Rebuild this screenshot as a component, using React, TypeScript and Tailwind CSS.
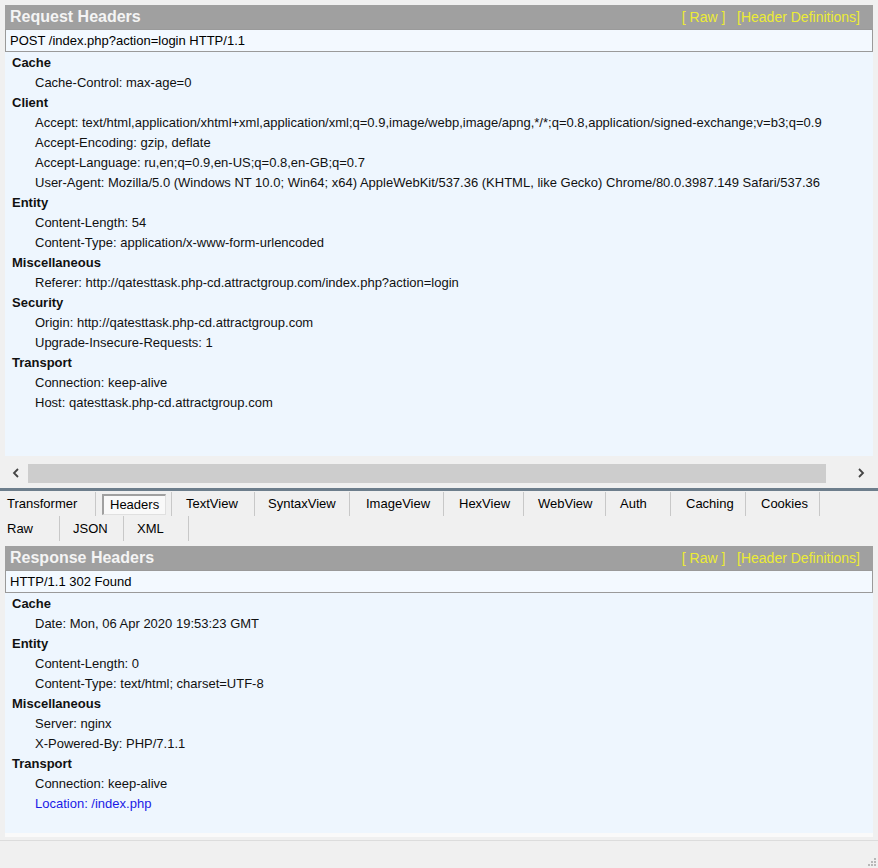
const font = { fontFamily: '"Liberation Sans", Arial, sans-serif' }

type Group = { title: string; items: { text: string; link?: boolean }[] }

const requestGroups: Group[] = [
  { title: "Cache", items: [{ text: "Cache-Control: max-age=0" }] },
  {
    title: "Client",
    items: [
      {
        text: "Accept: text/html,application/xhtml+xml,application/xml;q=0.9,image/webp,image/apng,*/*;q=0.8,application/signed-exchange;v=b3;q=0.9",
      },
      { text: "Accept-Encoding: gzip, deflate" },
      { text: "Accept-Language: ru,en;q=0.9,en-US;q=0.8,en-GB;q=0.7" },
      {
        text: "User-Agent: Mozilla/5.0 (Windows NT 10.0; Win64; x64) AppleWebKit/537.36 (KHTML, like Gecko) Chrome/80.0.3987.149 Safari/537.36",
      },
    ],
  },
  {
    title: "Entity",
    items: [{ text: "Content-Length: 54" }, { text: "Content-Type: application/x-www-form-urlencoded" }],
  },
  {
    title: "Miscellaneous",
    items: [{ text: "Referer: http://qatesttask.php-cd.attractgroup.com/index.php?action=login" }],
  },
  {
    title: "Security",
    items: [{ text: "Origin: http://qatesttask.php-cd.attractgroup.com" }, { text: "Upgrade-Insecure-Requests: 1" }],
  },
  {
    title: "Transport",
    items: [{ text: "Connection: keep-alive" }, { text: "Host: qatesttask.php-cd.attractgroup.com" }],
  },
]

const responseGroups: Group[] = [
  { title: "Cache", items: [{ text: "Date: Mon, 06 Apr 2020 19:53:23 GMT" }] },
  {
    title: "Entity",
    items: [{ text: "Content-Length: 0" }, { text: "Content-Type: text/html; charset=UTF-8" }],
  },
  {
    title: "Miscellaneous",
    items: [{ text: "Server: nginx" }, { text: "X-Powered-By: PHP/7.1.1" }],
  },
  {
    title: "Transport",
    items: [{ text: "Connection: keep-alive" }, { text: "Location: /index.php", link: true }],
  },
]

const tabsTop = [
  { label: "Transformer", w: "w-[96px] pl-[7px]" },
  { label: "Headers", w: "w-[76px] pl-[6px]", active: true },
  { label: "TextView", w: "w-[83px] pl-[14px]" },
  { label: "SyntaxView", w: "w-[95px] pl-[13px]" },
  { label: "ImageView", w: "w-[94px] pl-[16px]" },
  { label: "HexView", w: "w-[80px] pl-[15px]" },
  { label: "WebView", w: "w-[82px] pl-[14px]" },
  { label: "Auth", w: "w-[65px] pl-[14px]" },
  { label: "Caching", w: "w-[75px] pl-[15px]" },
  { label: "Cookies", w: "w-[74px] pl-[15px]" },
]

const tabsBottom = [
  { label: "Raw", w: "w-[60px] pl-[7px]" },
  { label: "JSON", w: "w-[64px] pl-[13px]" },
  { label: "XML", w: "w-[65px] pl-[13px]" },
]

function PanelHeader({ title, line }: { title: string; line: string }) {
  return (
    <>
      <div className="h-[24px] bg-[#a0a0a0] flex items-center justify-between pl-[5px] pr-[13px]">
        <span className="text-[16px] font-bold text-[#f4f4f4]">{title}</span>
        <span className="text-[14px] text-[#ecec34] whitespace-pre">{"[ Raw ]   [Header Definitions]"}</span>
      </div>
      <div className="h-[23px] bg-[#f3f9ff] border border-[#9a9a9a] flex items-center pl-[4px] text-[13px] text-black">
        {line}
      </div>
    </>
  )
}

function Groups({ groups }: { groups: Group[] }) {
  return (
    <div className="flex flex-col pl-[7px] pt-[1px] text-[13px] text-[#111]">
      {groups.map((g) => (
        <div key={g.title} className="flex flex-col">
          <div className="h-[20px] leading-[20px] font-bold">{g.title}</div>
          {g.items.map((it) => (
            <div
              key={it.text}
              className={
                "h-[20px] leading-[20px] pl-[23px] whitespace-nowrap " + (it.link ? "text-[#1a1ae6]" : "")
              }
            >
              {it.text}
            </div>
          ))}
        </div>
      ))}
    </div>
  )
}

function Tab({ label, w, active }: { label: string; w: string; active?: boolean }) {
  return (
    <div className={"h-full flex items-center border-r border-[#c8c8c8] shrink-0 " + w}>
      {active ? (
        <span className="px-[6px] h-[21px] flex items-center bg-[#f9f9f9] border-t-2 border-l-2 border-t-[#a0a0a0] border-l-[#a0a0a0] border-b border-r border-b-[#e0e0e0] border-r-[#e0e0e0]">
          {label}
        </span>
      ) : (
        <span>{label}</span>
      )}
    </div>
  )
}

function Chevron({ left }: { left?: boolean }) {
  return (
    <svg width="8" height="10" viewBox="0 0 8 10">
      <path
        d={left ? "M6 1 L2 5 L6 9" : "M2 1 L6 5 L2 9"}
        fill="none"
        stroke="#444"
        strokeWidth="1.8"
      />
    </svg>
  )
}

export default function App() {
  return (
    <div className="w-[878px] h-[868px] bg-[#f0f0f0] overflow-hidden flex flex-col" style={font}>
      <div className="h-[5px] shrink-0 bg-[#f0f0f0]" />

      <div className="mx-[5px] flex flex-col h-[451px] shrink-0">
        <PanelHeader title="Request Headers" line="POST /index.php?action=login HTTP/1.1" />
        <div className="flex-1 bg-[#eef6fe] overflow-hidden">
          <Groups groups={requestGroups} />
        </div>
      </div>

      <div className="mt-[7px] h-[20px] shrink-0 flex items-center">
        <div className="w-[28px] pl-[12px] flex items-center">
          <Chevron left />
        </div>
        <div className="w-[798px] h-[19px] bg-[#cdcdcd]" />
        <div className="flex-1 pl-[31px] flex items-center">
          <Chevron />
        </div>
      </div>

      <div className="mt-[5px] h-[3px] shrink-0 bg-[#6d7e8c]" />

      <div className="h-[24px] shrink-0 flex text-[13px] text-black mt-[1px]">
        {tabsTop.map((t) => (
          <Tab key={t.label} {...t} />
        ))}
      </div>
      <div className="h-[25px] shrink-0 flex text-[13px] text-black">
        {tabsBottom.map((t) => (
          <Tab key={t.label} {...t} />
        ))}
      </div>

      <div className="mt-[5px] mx-[5px] flex flex-col h-[291px] shrink-0 border-b-4 border-b-[#fafafa]">
        <PanelHeader title="Response Headers" line="HTTP/1.1 302 Found" />
        <div className="flex-1 bg-[#eef6fe] overflow-hidden">
          <Groups groups={responseGroups} />
        </div>
      </div>

      <div className="mt-[3px] h-[1px] bg-[#dcdcdc] shrink-0" />
      <div className="flex-1 flex items-end justify-end p-[2px]">
        <svg width="10" height="10" viewBox="0 0 10 10">
          {[
            [8, 2],
            [5, 5],
            [8, 5],
            [2, 8],
            [5, 8],
            [8, 8],
          ].map(([x, y]) => (
            <rect key={`${x}-${y}`} x={x} y={y} width="2" height="2" fill="#b8b8b8" />
          ))}
        </svg>
      </div>
    </div>
  )
}
